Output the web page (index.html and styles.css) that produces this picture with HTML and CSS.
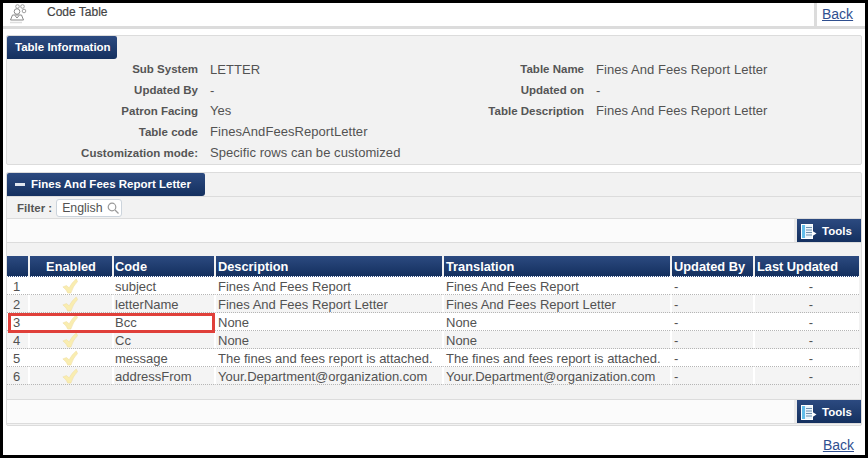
FILE: index.html
```html
<!DOCTYPE html>
<html lang="en">
<head>
<meta charset="utf-8">
<title>Code Table</title>
<link rel="stylesheet" href="styles.css">
</head>
<body>
<div class="frame">
  <header class="topbar">
    <div class="title-wrap">
      <svg class="page-icon" width="19" height="20" viewBox="0 0 19 20" fill="none" stroke="#a0a0a0" stroke-width="1">
        <circle cx="8.500" cy="2.500" r="1.800"/><circle cx="13.500" cy="2.500" r="1.800"/><circle cx="15" cy="7" r="1.800"/>
        <circle cx="8" cy="7.500" r="2.800" fill="#fff" stroke="#8a8a8a"/>
        <path d="M1.500 16 L3.500 11 H12.500 L14.500 16 Z" fill="#fff" stroke="#8a8a8a"/><path d="M6 11.500 L8 14 L10 11.500" stroke="#8a8a8a"/>
        <path d="M1 18.500 H13" stroke="#dedede" stroke-width="1.500"/>
      </svg>
      <span class="page-title">Code Table</span>
    </div>
    <a class="back back-top" href="#">Back</a>
  </header>

  <section class="panel info">
    <h2 class="tab tab-info">Table Information</h2>
    <div class="info-grid">
      <div class="lbl">Sub System</div><div class="val">LETTER</div><div class="lbl">Table Name</div><div class="val">Fines And Fees Report Letter</div>
      <div class="lbl">Updated By</div><div class="val">-</div><div class="lbl">Updated on</div><div class="val">-</div>
      <div class="lbl">Patron Facing</div><div class="val">Yes</div><div class="lbl">Table Description</div><div class="val">Fines And Fees Report Letter</div>
      <div class="lbl">Table code</div><div class="val">FinesAndFeesReportLetter</div><div></div><div></div>
      <div class="lbl">Customization mode:</div><div class="val">Specific rows can be customized</div><div></div><div></div>
    </div>
  </section>

  <section class="panel list">
    <h2 class="tab tab-wide"><span class="minus"></span>Fines And Fees Report Letter</h2>
    <div class="filter-row">
      <span class="filter-label">Filter :</span>
      <span class="filter-box">English
        <svg width="12" height="12" viewBox="0 0 12 12" fill="none" stroke="#9a9a9a" stroke-width="1.200"><circle cx="5" cy="5" r="3.800"/><path d="M8 8 L11.500 11.500"/></svg>
      </span>
    </div>
    <div class="toolbar">
      <button class="tools" type="button">
        <svg width="16" height="15" viewBox="0 0 16 15"><rect x="0.500" y="0.500" width="11" height="14" fill="#eaf4fb" stroke="#fff"/><rect x="1" y="1" width="3" height="13" fill="#62bdea"/><path d="M5 3.500H11M5 6H11M5 8.500H11M5 11H11" stroke="#6d8fae"/><path d="M11.500 7 L15.500 9.500 L11.500 12 Z" fill="#fff"/></svg>
        Tools
      </button>
    </div>
    <div class="gap-top"></div>
    <table class="grid">
      <colgroup>
        <col class="c-n"><col class="c-e"><col class="c-c"><col class="c-d"><col class="c-t"><col class="c-u"><col class="c-l">
      </colgroup>
      <thead>
        <tr><th></th><th class="ctr">Enabled</th><th class="code">Code</th><th>Description</th><th>Translation</th><th>Updated By</th><th>Last Updated</th></tr>
      </thead>
      <tbody>
        <tr><td>1</td><td class="ctr"><svg class="check" viewBox="0 0 18 18"><path d="M1 10 L5 8.500 L8 11 Q11 5 16 1 L17.500 4 Q12.500 9 10 17 L6.500 17 Q5 13 1 10 Z"/></svg></td><td class="code">subject</td><td>Fines And Fees Report</td><td>Fines And Fees Report</td><td>-</td><td class="ctr last">-</td></tr>
        <tr><td>2</td><td class="ctr"><svg class="check" viewBox="0 0 18 18"><path d="M1 10 L5 8.500 L8 11 Q11 5 16 1 L17.500 4 Q12.500 9 10 17 L6.500 17 Q5 13 1 10 Z"/></svg></td><td class="code">letterName</td><td>Fines And Fees Report Letter</td><td>Fines And Fees Report Letter</td><td>-</td><td class="ctr last">-</td></tr>
        <tr><td>3</td><td class="ctr"><svg class="check" viewBox="0 0 18 18"><path d="M1 10 L5 8.500 L8 11 Q11 5 16 1 L17.500 4 Q12.500 9 10 17 L6.500 17 Q5 13 1 10 Z"/></svg></td><td class="code">Bcc</td><td>None</td><td>None</td><td>-</td><td class="ctr last">-</td></tr>
        <tr><td>4</td><td class="ctr"><svg class="check" viewBox="0 0 18 18"><path d="M1 10 L5 8.500 L8 11 Q11 5 16 1 L17.500 4 Q12.500 9 10 17 L6.500 17 Q5 13 1 10 Z"/></svg></td><td class="code">Cc</td><td>None</td><td>None</td><td>-</td><td class="ctr last">-</td></tr>
        <tr><td>5</td><td class="ctr"><svg class="check" viewBox="0 0 18 18"><path d="M1 10 L5 8.500 L8 11 Q11 5 16 1 L17.500 4 Q12.500 9 10 17 L6.500 17 Q5 13 1 10 Z"/></svg></td><td class="code">message</td><td>The fines and fees report is attached.</td><td>The fines and fees report is attached.</td><td>-</td><td class="ctr last">-</td></tr>
        <tr><td>6</td><td class="ctr"><svg class="check" viewBox="0 0 18 18"><path d="M1 10 L5 8.500 L8 11 Q11 5 16 1 L17.500 4 Q12.500 9 10 17 L6.500 17 Q5 13 1 10 Z"/></svg></td><td class="code">addressFrom</td><td>Your.Department@organization.com</td><td>Your.Department@organization.com</td><td>-</td><td class="ctr last">-</td></tr>
      </tbody>
    </table>
    <div class="gap-bottom"></div>
    <div class="toolbar">
      <button class="tools" type="button">
        <svg width="16" height="15" viewBox="0 0 16 15"><rect x="0.500" y="0.500" width="11" height="14" fill="#eaf4fb" stroke="#fff"/><rect x="1" y="1" width="3" height="13" fill="#62bdea"/><path d="M5 3.500H11M5 6H11M5 8.500H11M5 11H11" stroke="#6d8fae"/><path d="M11.500 7 L15.500 9.500 L11.500 12 Z" fill="#fff"/></svg>
        Tools
      </button>
    </div>
    <div class="highlight"></div>
  </section>

  <footer class="foot"><a class="back" href="#">Back</a></footer>
</div>
</body>
</html>
```

FILE: styles.css
```css
* { box-sizing: border-box; }
html, body { margin: 0; padding: 0; }
body { width: 868px; height: 458px; overflow: hidden; background: #fff; font-family: "Liberation Sans", Arial, sans-serif; font-size: 13px; color: #525252; }
.frame { width: 868px; height: 458px; border: 3px solid #000; background: #fff; }

.topbar { display: flex; height: 26px; width: 100%; border-bottom: 3px solid #dcdcdc; }
.title-wrap { flex: 1; display: flex; align-items: flex-start; border-right: 3px solid #dcdcdc; }
.page-icon { margin: 1px 0 0 6px; }
.page-title { margin: 2px 0 0 19px; font-size: 12px; line-height: 14px; color: #444; -webkit-text-stroke: 0.2px #444; }
.back { color: #2f4f8f; font-size: 14px; text-decoration: underline; }
.back-top { width: 48px; padding: 3px 0 0 5px; }

.panel { background: #f2f2f2; border: 1px solid #dcdcdc; border-radius: 2px; width: 856px; margin-left: 3px; position: relative; }
.info { height: 130px; margin-top: 6px; }
.tab { margin: 0; display: inline-block; height: 23px; line-height: 23px; padding: 0 8px; color: #fff; font-size: 11.5px; font-weight: bold; white-space: nowrap; background: linear-gradient(#2c4a80, #14305f); border-radius: 2px 2px 3px 0; vertical-align: top; }
.tab-info { width: 110px; padding-right: 0; }
.info-grid { display: grid; grid-template-columns: 191px 280px 106px 1fr; grid-auto-rows: 20.800px; align-items: center; }
.lbl { text-align: right; font-size: 11.5px; font-weight: bold; color: #555; }
.val { padding-left: 12px; letter-spacing: 0.06px; }

.list { height: 254px; margin-top: 7px; }
.tab-wide { display: flex; width: 198px; align-items: center; padding-left: 8px; }
.minus { width: 10px; height: 3px; background: #dfe5ee; margin-right: 6px; flex: none; }
.filter-row { height: 23px; display: flex; align-items: center; padding-left: 10px; gap: 4px; border-top: 1px solid #dcdcdc; border-bottom: 1px solid #dcdcdc; }
.filter-label { font-size: 11.5px; font-weight: bold; color: #555; }
.filter-box { display: inline-flex; align-items: center; gap: 5px; height: 18px; width: 66px; padding-left: 5px; font-size: 12.300px; background: #fff; border: 1px solid #ccd4dc; border-radius: 3px; }
.toolbar { height: 24px; display: flex; justify-content: flex-end; background: #fbfbfb; border-bottom: 1px solid #dcdcdc; }
.tools { display: flex; align-items: center; gap: 5px; width: 67px; height: 23px; padding: 1px 0 0 4px; margin: 0; border: 0; border-left: 3px solid #ebebeb; background: linear-gradient(#2c4a80, #14305f); background-clip: padding-box; color: #fff; font: bold 11.500px "Liberation Sans", Arial, sans-serif; }
.gap-top { height: 13px; }
.gap-bottom { height: 15px; border-bottom: 1px solid #dcdcdc; }

.grid { width: 852px; table-layout: fixed; border-collapse: separate; border-spacing: 0; }
.c-n { width: 21px; } .c-e { width: 84px; } .c-c { width: 102px; } .c-d { width: 228px; } .c-t { width: 228px; } .c-u { width: 83px; } .c-l { width: 106px; }
.grid th { height: 21px; padding: 0 0 0 2px; text-align: left; color: #fff; font-size: 12.800px; font-weight: bold; background: linear-gradient(#2c4a80, #14305f); border-left: 2px solid #f2f2f2; border-bottom: 1px dotted #fff; }
.grid th:first-child { border-left: 0; }
.grid th.ctr { padding-left: 0; text-align: center; }
.grid td { height: 18px; padding: 1px 0 0 2px; line-height: 15px; background: #fff; border-left: 2px solid #fff; border-bottom: 1px dotted #b5b5b5; white-space: nowrap; overflow: hidden; }
.grid td:first-child { border-left: 0; padding-left: 6px; }
.grid tbody tr:nth-child(even) td { background: #f4f4f4; }
.grid td.ctr { text-align: center; padding: 0 2px 0 0; }
.grid td.last { padding: 1px 0 0 8px; }
.grid th.code, .grid td.code { padding-left: 1px; }
.check { width: 16px; height: 16px; display: block; margin: 0 auto; fill: #f9edb0; stroke: #ecd997; stroke-width: 0.5; }

.highlight { position: absolute; left: 1px; top: 140px; width: 207px; height: 20px; border: 3px solid #e0403a; }
.foot { text-align: right; padding: 11px 11px 0 0; }
```
